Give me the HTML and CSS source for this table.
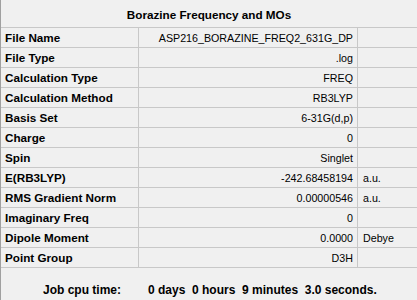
FILE: index.html
```html
<!DOCTYPE html>
<html>
<head>
<meta charset="utf-8">
<link rel="stylesheet" href="styles.css">
</head>
<body>
<div class="panel">
  <div class="title">Borazine Frequency and MOs</div>
  <div class="row"><div class="label">File Name</div><div class="value">ASP216_BORAZINE_FREQ2_631G_DP</div><div class="unit"></div></div>
  <div class="row"><div class="label">File Type</div><div class="value">.log</div><div class="unit"></div></div>
  <div class="row"><div class="label">Calculation Type</div><div class="value">FREQ</div><div class="unit"></div></div>
  <div class="row"><div class="label">Calculation Method</div><div class="value">RB3LYP</div><div class="unit"></div></div>
  <div class="row"><div class="label">Basis Set</div><div class="value">6-31G(d,p)</div><div class="unit"></div></div>
  <div class="row"><div class="label">Charge</div><div class="value">0</div><div class="unit"></div></div>
  <div class="row"><div class="label">Spin</div><div class="value">Singlet</div><div class="unit"></div></div>
  <div class="row"><div class="label">E(RB3LYP)</div><div class="value">-242.68458194</div><div class="unit">a.u.</div></div>
  <div class="row"><div class="label">RMS Gradient Norm</div><div class="value">0.00000546</div><div class="unit">a.u.</div></div>
  <div class="row"><div class="label">Imaginary Freq</div><div class="value">0</div><div class="unit"></div></div>
  <div class="row"><div class="label">Dipole Moment</div><div class="value">0.0000</div><div class="unit">Debye</div></div>
  <div class="row"><div class="label">Point Group</div><div class="value">D3H</div><div class="unit"></div></div>
  <div class="footer"><span class="flabel">Job cpu time:</span><span class="ftime">0 days  0 hours  9 minutes  3.0 seconds.</span></div>
</div>
</body>
</html>
```
FILE: styles.css
```css
html, body {
  margin: 0;
  padding: 0;
  background: #f0f0f0;
}
body {
  font-family: "Liberation Sans", Arial, sans-serif;
  color: #000;
}
.panel {
  width: 417px;
  height: 300px;
  box-sizing: border-box;
  border-left: 1px solid #a0a0a0;
  overflow: hidden;
}
.title {
  height: 28px;
  box-sizing: border-box;
  border-bottom: 1px solid #c8c8c8;
  display: flex;
  align-items: center;
  justify-content: center;
  padding-top: 2px;
  font-weight: bold;
  font-size: 11.7px;
}
.row {
  display: grid;
  grid-template-columns: 138px 219px 1fr;
  height: 20px;
  box-sizing: border-box;
  border-bottom: 1px solid #c8c8c8;
}
.row > div {
  display: flex;
  align-items: center;
  box-sizing: border-box;
  white-space: nowrap;
  overflow: hidden;
}
.label {
  border-right: 1px solid #c8c8c8;
  padding-left: 4px;
  font-weight: bold;
  font-size: 11.7px;
}
.value {
  border-right: 1px solid #c8c8c8;
  justify-content: flex-end;
  padding-right: 4px;
  font-size: 10.7px;
}
.unit {
  padding-left: 5px;
  font-size: 10.7px;
}
.footer {
  display: flex;
  padding-top: 15px;
  padding-left: 42px;
  font-weight: bold;
  font-size: 12px;
  line-height: 14px;
}
.flabel {
  width: 105px;
}
.ftime {
  white-space: pre;
}
```
